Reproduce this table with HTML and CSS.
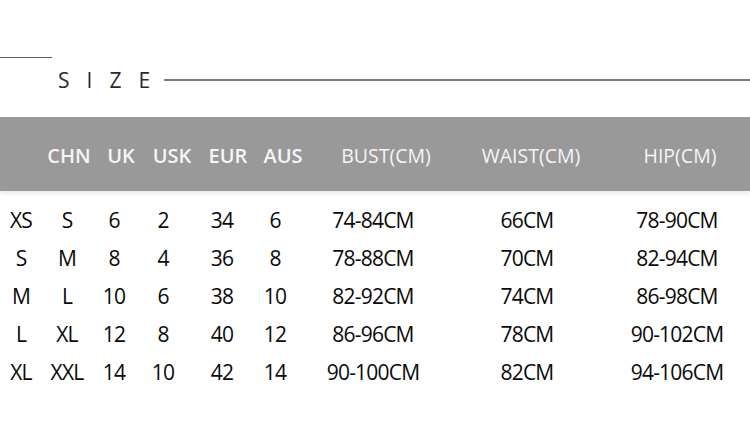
FILE: index.html
```html
<!DOCTYPE html>
<html>
<head>
<meta charset="utf-8">
<link rel="stylesheet" href="styles.css">
</head>
<body>
<div class="page">
  <div class="topline"></div>
  <div class="title-row">
    <span class="title">SIZE</span>
    <span class="rule"></span>
  </div>
  <div class="band">
    <div class="head">
      <span class="h b">CHN</span>
      <span class="h b">UK</span>
      <span class="h b">USK</span>
      <span class="h b">EUR</span>
      <span class="h b">AUS</span>
      <span class="h">BUST(CM)</span>
      <span class="h">WAIST(CM)</span>
      <span class="h hip">HIP(CM)</span>
    </div>
  </div>
  <div class="rows">
    <span>XS</span><span>S</span><span>6</span><span>2</span><span>34</span><span>6</span><span>74-84CM</span><span>66CM</span><span>78-90CM</span>
    <span>S</span><span>M</span><span>8</span><span>4</span><span>36</span><span>8</span><span>78-88CM</span><span>70CM</span><span>82-94CM</span>
    <span>M</span><span>L</span><span>10</span><span>6</span><span>38</span><span>10</span><span>82-92CM</span><span>74CM</span><span>86-98CM</span>
    <span>L</span><span>XL</span><span>12</span><span>8</span><span>40</span><span>12</span><span>86-96CM</span><span>78CM</span><span>90-102CM</span>
    <span>XL</span><span>XXL</span><span>14</span><span>10</span><span>42</span><span>14</span><span>90-100CM</span><span>82CM</span><span>94-106CM</span>
  </div>
</div>
</body>
</html>
```
FILE: styles.css
```css
* { box-sizing: border-box; }
html, body { margin: 0; padding: 0; background: #fff; }
body { width: 750px; height: 426px; overflow: hidden; font-family: "Open Sans", "DejaVu Sans", sans-serif; }
.page { padding-top: 57px; }
.topline { width: 52px; height: 1px; background: #5a5a5a; }
.title-row {
  display: flex;
  align-items: center;
  height: 24px;
  margin-top: 10px;
}
.title {
  margin-left: 58px;
  font-size: 21px;
  letter-spacing: 17px;
  color: #2a2a2a;
  line-height: 24px;
}
.rule {
  flex: 1;
  height: 2px;
  margin-left: -3px;
  background: #7a7a7a;
}
.band {
  margin-top: 25px;
  height: 74px;
  background: #999;
  display: flex;
  align-items: center;
  box-shadow: 0 3px 4px rgba(0,0,0,0.08);
}
.head {
  display: grid;
  grid-template-columns: 50px 54px 48px 64px 46px 160px 130px 1fr;
  padding-left: 44px;
  width: 100%;
  padding-top: 2px;
  align-items: center;
}
.h {
  text-align: center;
  color: #f5f5f5;
  font-size: 19.5px;
  font-weight: 400;
  white-space: nowrap;
}
.h.b { font-size: 20px; font-weight: 600; }
.h.hip { padding-left: 14px; }
.rows {
  margin-top: 10px;
  display: grid;
  grid-template-columns: 42px 50px 44px 54px 64px 42px 154px 154px 146px;
  grid-auto-rows: 38px;
  align-items: center;
}
.rows span {
  text-align: center;
  font-size: 21px;
  letter-spacing: -0.8px;
  color: #0a0a0a;
  white-space: nowrap;
}
```
